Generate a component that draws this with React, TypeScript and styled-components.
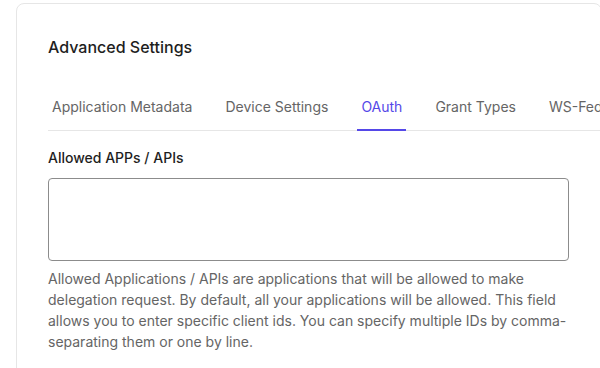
import React, { useState } from 'react';
import styled, { createGlobalStyle } from 'styled-components';

const GlobalStyle = createGlobalStyle`
  html, body {
    margin: 0;
    padding: 0;
    background: #ffffff;
    overflow: hidden;
  }
  body {
    font-family: Inter, "Noto Sans", sans-serif;
    -webkit-font-smoothing: antialiased;
  }
`;

const Page = styled.div`
  padding: 3px 0 0 16px;
  width: 640px;
`;

const Card = styled.section`
  border: 1px solid #e6e6e6;
  border-radius: 8px;
  background: #ffffff;
  padding: 31px 32px 32px 31px;
  width: 521px;
`;

const Title = styled.h2`
  margin: 0 0 28px;
  font-size: 16px;
  line-height: 24px;
  font-weight: 500;
  color: #1e1e1e;
`;

const TabList = styled.div`
  display: flex;
  gap: 25px;
  border-bottom: 1px solid #e6e6e6;
  margin-right: -80px;
`;

const Tab = styled.button<{ $active: boolean }>`
  border: none;
  background: none;
  font-family: inherit;
  cursor: pointer;
  padding: 10px 4px 12px;
  margin-bottom: -1px;
  font-size: 14px;
  line-height: 20px;
  white-space: nowrap;
  color: ${(p) => (p.$active ? '#5548e8' : '#656565')};
  border-bottom: 2px solid ${(p) => (p.$active ? '#5548e8' : 'transparent')};
`;

const Field = styled.div`
  display: flex;
  flex-direction: column;
  padding-top: 17px;
`;

const Label = styled.label`
  font-size: 14px;
  line-height: 20px;
  font-weight: 450;
  color: #1e1e1e;
  margin-bottom: 10px;
`;

const TextArea = styled.textarea`
  box-sizing: border-box;
  width: 521px;
  height: 83px;
  border: 1px solid #8c8c8c;
  border-radius: 4px;
  resize: none;
  font-family: inherit;
  font-size: 14px;
  padding: 8px 12px;
  outline: none;
`;

const Help = styled.p`
  margin: 7px 0 0;
  font-size: 14px;
  line-height: 21px;
  color: #656565;
`;

const tabs = ['Application Metadata', 'Device Settings', 'OAuth', 'Grant Types', 'WS-Fed'];

const App: React.FC = () => {
  const [active, setActive] = useState('OAuth');

  return (
    <>
      <GlobalStyle />
      <Page>
        <Card>
          <Title>Advanced Settings</Title>
          <TabList>
            {tabs.map((t) => (
              <Tab key={t} $active={active === t} onClick={() => setActive(t)}>
                {t}
              </Tab>
            ))}
          </TabList>
          <Field>
            <Label htmlFor="allowed-apps">Allowed APPs / APIs</Label>
            <TextArea id="allowed-apps" />
            <Help>
              Allowed Applications / APIs are applications that will be allowed to make delegation
              request. By default, all your applications will be allowed. This field allows you to
              enter specific client ids. You can specify multiple IDs by comma-separating them or
              one by line.
            </Help>
          </Field>
        </Card>
      </Page>
    </>
  );
};

export default App;
